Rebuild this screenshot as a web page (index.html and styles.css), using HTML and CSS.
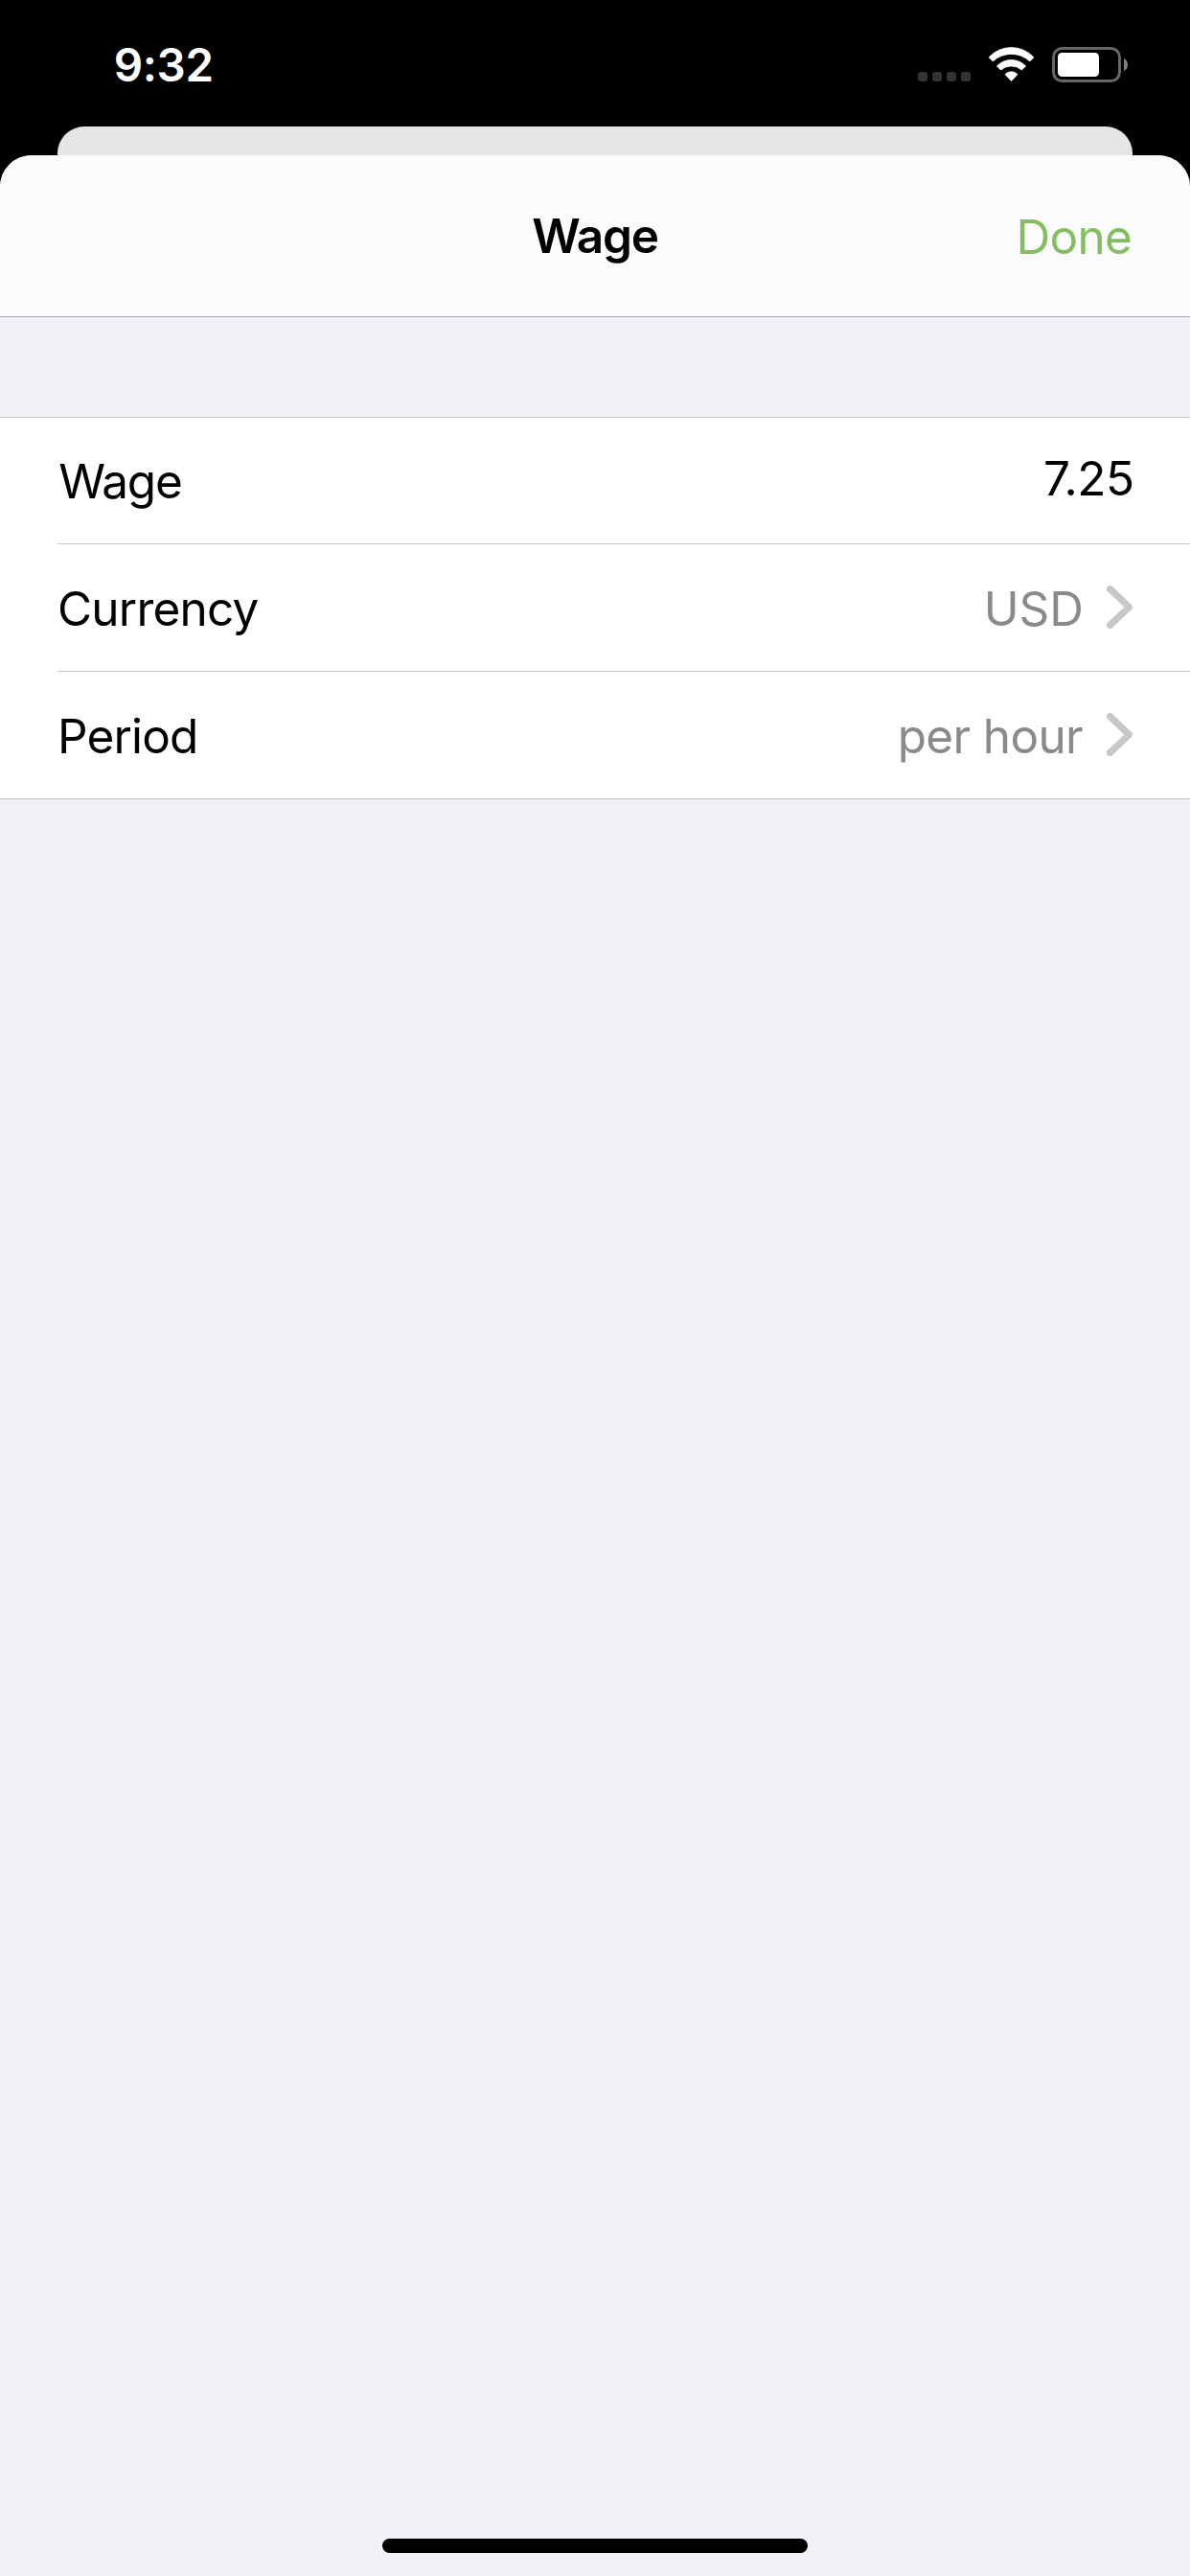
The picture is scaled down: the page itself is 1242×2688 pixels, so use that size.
FILE: index.html
```
<!DOCTYPE html>
<html lang="en">
<head>
<meta charset="utf-8">
<title>Wage</title>
<link rel="stylesheet" href="styles.css">
</head>
<body>
<div class="screen">
  <div class="status">
    <span class="time">9:32</span>
    <div class="indicators">
      <svg class="cell" width="55" height="10" viewBox="0 0 55 10" fill="#333">
        <rect width="10" height="10" rx="3"/><rect x="15" width="10" height="10" rx="3"/><rect x="30" width="10" height="10" rx="3"/><rect x="45" width="10" height="10" rx="3"/>
      </svg>
      <svg class="wifi" width="49" height="37" viewBox="0 0 49 37" fill="#fff" stroke="#fff" stroke-width=".8" stroke-linejoin="round">
        <path d="M1.1 10.8A31.8 31.8 0 0 1 47.9 10.8L43.7 15A28 28 0 0 0 5.3 15Z"/>
        <path d="M9.4 19.9A21 21 0 0 1 39.6 19.9L35.4 24.1A16.5 16.5 0 0 0 13.6 24.1Z"/>
        <path d="M18 28.6A9 9 0 0 1 31 28.6L24.5 35.6Z"/>
      </svg>
      <svg class="battery" width="79" height="37" viewBox="0 0 79 37">
        <rect x="1.5" y="1.5" width="69" height="34" rx="9" fill="none" stroke="#666" stroke-width="3"/>
        <rect x="6" y="6" width="43" height="25" rx="4.5" fill="#fff"/>
        <path d="M75 12Q79 14 79 18.5T75 25Z" fill="#808080"/>
      </svg>
    </div>
  </div>
  <div class="back-card"></div>
  <main class="sheet">
    <header class="header">
      <h1 class="title">Wage</h1>
      <span class="done">Done</span>
    </header>
    <div class="list">
      <div class="row wage">
        <span class="label">Wage</span>
        <span class="amount">7.25</span>
      </div>
      <div class="row currency">
        <span class="label">Currency</span>
        <span class="value">USD</span>
        <svg class="chevron" width="27" height="45" viewBox="0 0 27 45"><path d="M3.6 3.6L23.4 22.5L3.6 41.4"/></svg>
      </div>
      <div class="row period">
        <span class="label">Period</span>
        <span class="value">per hour</span>
        <svg class="chevron" width="27" height="45" viewBox="0 0 27 45"><path d="M3.6 3.6L23.4 22.5L3.6 41.4"/></svg>
      </div>
    </div>
    <div class="home-bar"></div>
  </main>
</div>
</body>
</html>
```
FILE: styles.css
```
* { box-sizing: border-box; }
body { margin: 0; background: #000; }
.screen {
  width: 1242px;
  height: 2688px;
  display: flex;
  flex-direction: column;
  background: #000;
  color: #000;
  font: 400 49.5px/60px Inter, sans-serif;
  white-space: nowrap;
}
.status {
  height: 132px;
  display: flex;
  justify-content: space-between;
  padding: 38px 65px 0 118.7px;
}
.time {
  color: #fff;
  font-size: 47.5px;
  font-weight: 600;
  letter-spacing: -.32px;
}
.indicators { display: flex; padding-top: 11px; }
.cell { margin: 26px 18px 0 0; }
.wifi { margin-right: 18px; }
.back-card {
  height: 30px;
  margin: 0 60px;
  border-radius: 28px 28px 0 0;
  background: #e5e5e5;
}
.sheet {
  flex: 1;
  display: flex;
  flex-direction: column;
  border-radius: 33px 33px 0 0;
  background: #f2f1f7;
  overflow: hidden;
}
.header {
  height: 169px;
  display: grid;
  grid-template-columns: 1fr auto 1fr;
  align-items: center;
  padding: 0 60.7px;
  border-bottom: 1px solid #a7a7ab;
  background: #fbfbfe;
}
.title {
  grid-column: 2;
  margin: 0;
  font: inherit;
  font-weight: 600;
  letter-spacing: -1.22px;
}
.done {
  justify-self: end;
  padding-top: 2px;
  color: #85bd63;
  letter-spacing: -.65px;
}
.list {
  margin-top: 104px;
  border: solid #c6c6c8;
  border-width: 1px 0;
  background: #fff;
}
.row {
  height: 133px;
  display: flex;
  align-items: center;
  margin-left: 60px;
  padding-right: 60px;
  border-bottom: 1px solid #c6c6c8;
}
.row:last-child { height: 132px; border-bottom: 0; }
.label { margin-right: auto; padding-top: 2px; }
.wage { height: 132px; padding-right: 58.3px; }
.wage .label { padding: 1px 0 0 1.3px; letter-spacing: -1.24px; }
.currency .label { letter-spacing: -.8px; }
.period .label { letter-spacing: -.86px; }
.amount { padding-bottom: 5px; letter-spacing: -.42px; }
.value { padding-top: 2px; color: #8a8a8e; }
.currency .value { margin-right: 24px; letter-spacing: -.05px; }
.period .value { margin-right: 25px; letter-spacing: -.66px; }
.chevron {
  margin-bottom: 1px;
  fill: none;
  stroke: #c7c7cc;
  stroke-width: 7.2;
  stroke-linecap: round;
  stroke-linejoin: round;
}
.home-bar {
  width: 444px;
  height: 15px;
  margin: auto auto 24px;
  border-radius: 8px;
  background: #000;
}
```
